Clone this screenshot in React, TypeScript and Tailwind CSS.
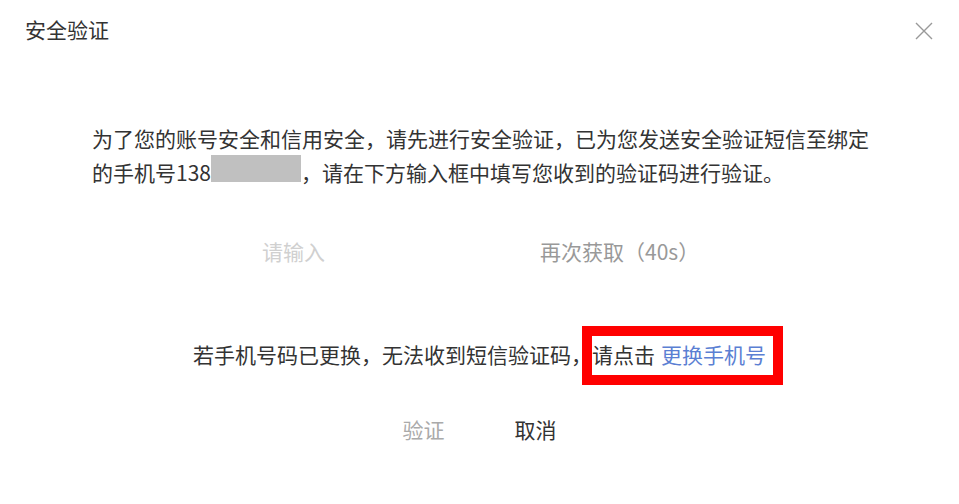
import React from "react";

const font = { fontFamily: '"Noto Sans CJK SC", "Liberation Sans", sans-serif' };

function CloseIcon() {
  return (
    <svg width="18" height="18" viewBox="0 0 18 18" className="block">
      <path d="M1 1 L17 17 M17 1 L1 17" stroke="#999999" strokeWidth="1.4" fill="none" />
    </svg>
  );
}

export default function App() {
  return (
    <div
      className="w-[959px] h-[504px] bg-white text-[#333333] text-[21px] overflow-hidden flex flex-col"
      style={font}
    >
      {/* header */}
      <div className="h-[62px] flex items-center justify-between pl-[25px] pr-[26px] shrink-0">
        <div className="leading-[31px] text-[21px] text-[#333333] -mt-[3px]">安全验证</div>
        <button className="w-[18px] h-[18px] flex items-center justify-center -mt-[1px]">
          <CloseIcon />
        </button>
      </div>

      {/* message */}
      <div className="mt-[61px] flex justify-center">
        <p className="leading-[31px] text-left text-[#333333] pl-[2px]">
          为了您的账号安全和信用安全，请先进行安全验证，已为您发送安全验证短信至绑定
          <br />
          的手机号138
          <span className="inline-block w-[90px] h-[27px] bg-[#c0c0c0] relative top-[1px]" />
          ，请在下方输入框中填写您收到的验证码进行验证。
        </p>
      </div>

      {/* code input */}
      <div className="mt-[43px] h-[40px] flex items-center justify-center gap-[20px] pr-[7px]">
        <input
          className="w-[258px] h-[40px] border-0 outline-none bg-transparent text-[21px] leading-[31px] placeholder:text-[#d0d0d0]"
          style={font}
          placeholder="请输入"
        />
        <button className="w-[150px] text-left text-[21px] leading-[31px] text-[#999999]">
          再次获取（40s）
        </button>
      </div>

      {/* change phone */}
      <div className="mt-[53px] h-[60px] flex items-center justify-center">
        <div className="leading-[31px] text-[#333333]">
          若手机号码已更换，无法收到短信验证码，
          <span className="relative inline-block h-[31px]">
            请点击
            <a className="ml-[6px] text-[#5b7fd3] cursor-pointer">更换手机号</a>
            <span className="absolute -left-[10px] -right-[17px] -top-[13px] -bottom-[15px] border-[10px] border-[#ff0000]" />
          </span>
        </div>
      </div>

      {/* actions */}
      <div className="mt-[25px] h-[40px] flex items-center justify-center gap-[70px]">
        <button className="text-[21px] leading-[31px] text-[#aaaaaa]">验证</button>
        <button className="text-[21px] leading-[31px] text-[#333333]">取消</button>
      </div>
    </div>
  );
}
